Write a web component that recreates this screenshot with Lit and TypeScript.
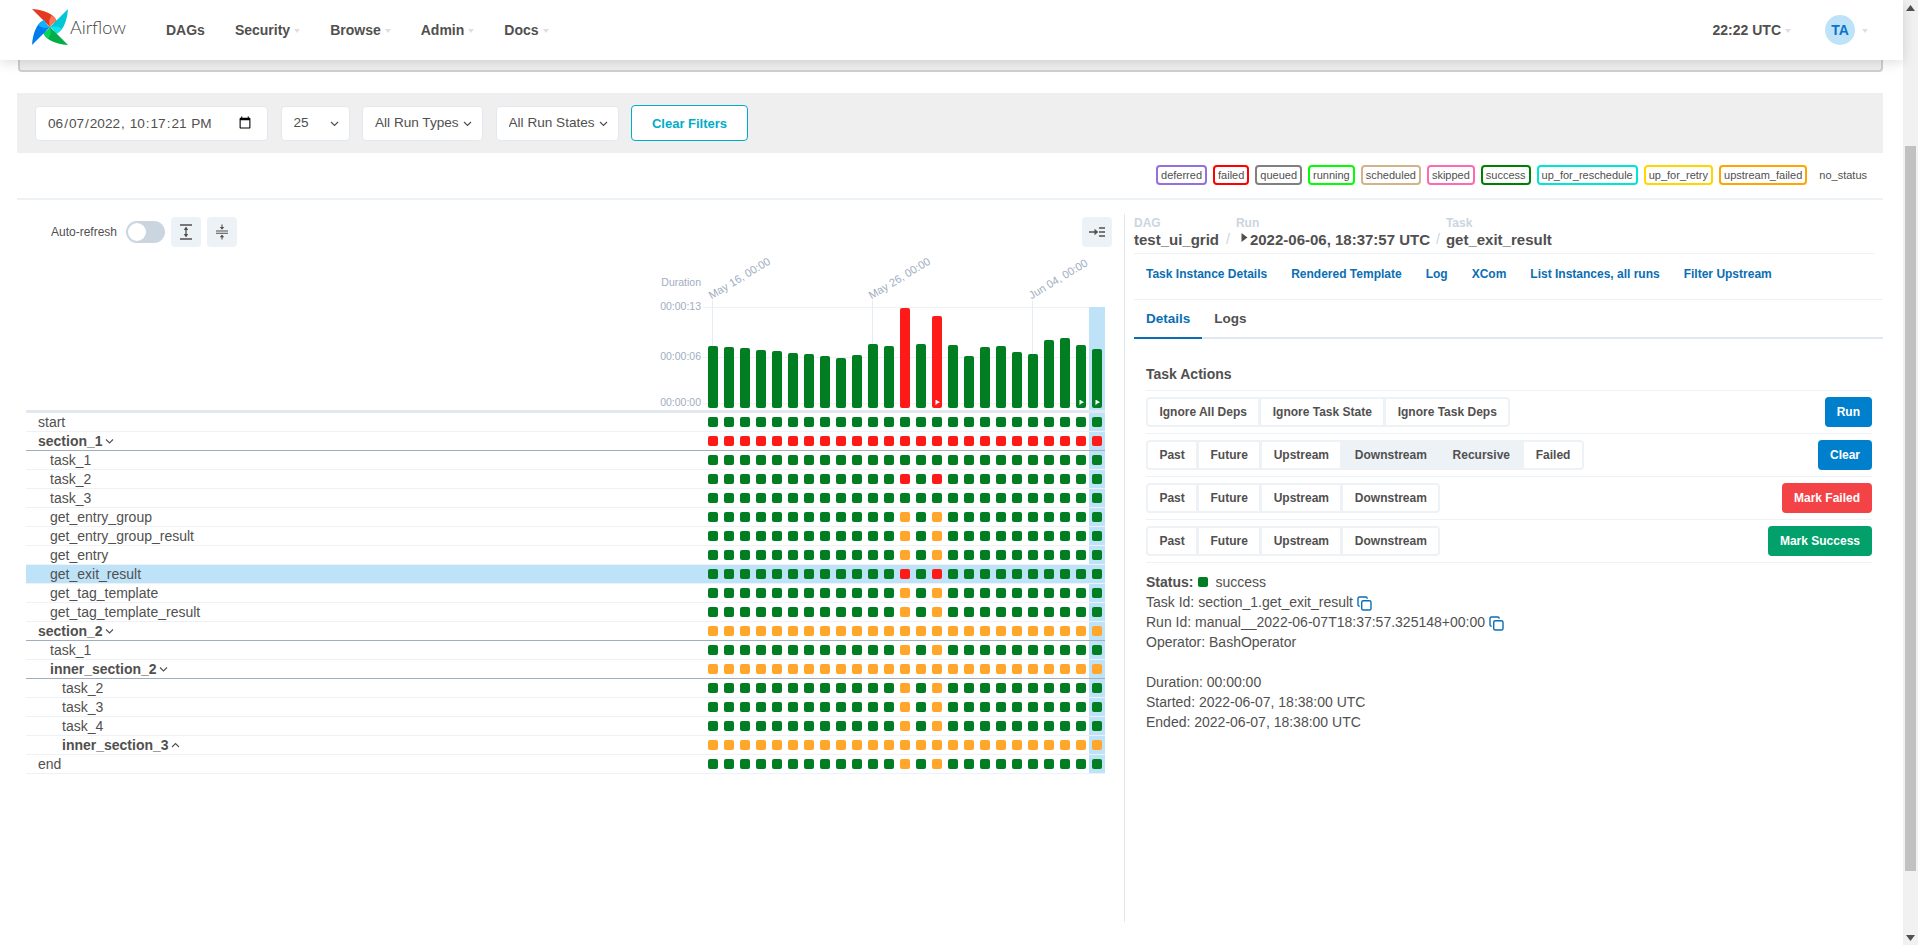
import { LitElement, html, css, svg } from "lit";
import { customElement } from "lit/decorators.js";

const HEIGHTS = [62,61,60,58,57,55,54,52,50,53,64,62,100,64,92,63,52,61,62,56,54,68,70,63,59];
const FAILED_BARS = new Set([12, 14]);
const PLAY_BARS = new Set([14, 23, 24]);
const TICKS = [
  { x: 7, label: "May 16, 00:00" },
  { x: 167, label: "May 26, 00:00" },
  { x: 327, label: "Jun 04, 00:00" },
];

type Row = { name: string; level: number; kind: "g" | "o" | "r" | "allo" | "allr" | "allg"; group?: "open" | "closed"; selected?: boolean };
const ROWS: Row[] = [
  { name: "start", level: 0, kind: "allg" },
  { name: "section_1", level: 0, kind: "allr", group: "open" },
  { name: "task_1", level: 1, kind: "allg" },
  { name: "task_2", level: 1, kind: "r" },
  { name: "task_3", level: 1, kind: "allg" },
  { name: "get_entry_group", level: 1, kind: "o" },
  { name: "get_entry_group_result", level: 1, kind: "o" },
  { name: "get_entry", level: 1, kind: "o" },
  { name: "get_exit_result", level: 1, kind: "r", selected: true },
  { name: "get_tag_template", level: 1, kind: "o" },
  { name: "get_tag_template_result", level: 1, kind: "o" },
  { name: "section_2", level: 0, kind: "allo", group: "open" },
  { name: "task_1", level: 1, kind: "o" },
  { name: "inner_section_2", level: 1, kind: "allo", group: "open" },
  { name: "task_2", level: 2, kind: "o" },
  { name: "task_3", level: 2, kind: "o" },
  { name: "task_4", level: 2, kind: "o" },
  { name: "inner_section_3", level: 2, kind: "allo", group: "closed" },
  { name: "end", level: 0, kind: "o" },
];

const LEGEND = [
  ["deferred", "#9370db"], ["failed", "#ff0000"], ["queued", "#808080"], ["running", "#00ff00"],
  ["scheduled", "#d2b48c"], ["skipped", "#ff69b4"], ["success", "#008000"], ["up_for_reschedule", "#00e5d6"],
  ["up_for_retry", "#ffd700"], ["upstream_failed", "#ffa500"],
];

const stateClass = (r: Row, i: number) => {
  const k = r.kind as string;
  if (k === "allr") return "red";
  if (k === "allo") return "orange";
  if (k === "allg") return "green";
  if (i === 12 || i === 14) return k === "r" ? "red" : "orange";
  return "green";
};

const chevDown = svg`<path d="M1 1.5 L4.5 5 L8 1.5" fill="none" stroke="currentColor" stroke-width="1.1"/>`;
const chevUp = svg`<path d="M1 5 L4.5 1.5 L8 5" fill="none" stroke="currentColor" stroke-width="1.1"/>`;

const copyIcon = html`<svg class="copy" width="15" height="15" viewBox="0 0 15 15" fill="none" stroke="#0a6eb4" stroke-width="1.4">
  <rect x="4.7" y="4.7" width="9.3" height="9.3" rx="1.6"/>
  <path d="M2.7 10.2 H2.4 A1.4 1.4 0 0 1 1 8.8 V2.4 A1.4 1.4 0 0 1 2.4 1 H8.8 A1.4 1.4 0 0 1 10.2 2.4 V2.7"/>
</svg>`;

const selectArrow = html`<svg class="sel-arrow" width="9" height="6" viewBox="0 0 9 6"><path d="M1 1 L4.5 4.5 L8 1" fill="none" stroke="#51504f" stroke-width="1.2"/></svg>`;

const logo = html`<svg class="logo" width="36" height="36" viewBox="0 0 36 36">
  ${[
    [0, "#e43921", "#ff7557"],
    [90, "#00c7d4", "#11e1ee"],
    [180, "#00ad46", "#04d659"],
    [270, "#017cee", "#0cb6ff"],
  ].map(([a, dark, light]) => svg`<g transform="rotate(${a} 18 18)">
    <path d="M0 0 L18 18 C19 15 22 13.5 25 12.5 C23 6 14 1 0 0 Z" fill="${dark}"/>
    <path d="M18 18 C19 15 22 13.5 25 12.5 C24 10 22 8 19.5 6.5 C17 10 16.5 14 18 18 Z" fill="${light}"/>
  </g>`)}
</svg>`;

@customElement("app-root")
export class AppRoot extends LitElement {
  static styles = css`
    :host { display: block; height: 100vh; overflow: hidden; font-family: "Liberation Sans", Arial, sans-serif; color: #51504f; font-size: 14px; background: #fff; }
    * { box-sizing: border-box; }
    .page { display: flex; height: 100%; }
    .content { flex: 1; min-width: 0; display: flex; flex-direction: column; }

    .scrollbar { width: 15px; background: #f1f1f1; display: flex; flex-direction: column; align-items: center; }
    .arrow-btn { height: 15px; display: flex; align-items: center; justify-content: center; flex: none; }
    .track { flex: 1; width: 100%; padding: 131px 2px 59px; }
    .thumb { height: 100%; background: #c1c1c1; }

    nav { height: 60px; flex: none; background: #fff; display: flex; align-items: center; padding: 0 34px 0 32px; box-shadow: 0 2px 12px rgba(0,0,0,.14); position: relative; z-index: 2; }
    .logo { display: block; margin-top: -6px; flex: none; }
    .brand { font-family: Lato, sans-serif; font-size: 18px; font-weight: 300; margin: -6px 0 0 2px; width: 56px; color: #444; }
    .nav-item { font-weight: 700; font-size: 14px; margin-left: 30px; display: flex; align-items: center; }
    .nav-item.first { margin-left: 40px; }
    .caret { width: 0; height: 0; border: 3.5px solid transparent; border-top: 4px solid #e6dae6; border-bottom: 0; margin-left: 4px; margin-top: 2px; }
    .spacer { flex: 1; }
    .clock { margin-right: 34px; }
    .avatar { width: 30px; height: 30px; border-radius: 50%; background: #bee3f8; color: #0a73c8; font-weight: 700; display: flex; align-items: center; justify-content: center; font-size: 14px; }
    .nav-user { display: flex; align-items: center; }
    .nav-user .caret { margin-left: 7px; margin-right: 1px; }

    .stub { height: 12px; flex: none; margin: 0 20px 0 18px; background: #efefef; border: 2px solid #cfcfcf; border-top: 0; border-radius: 0 0 4px 4px; }

    .filters { height: 60px; flex: none; margin: 21px 20px 0 17px; background: #efefef; display: flex; align-items: center; padding-left: 18px; gap: 12.5px; }
    .date { width: 233px; height: 35px; border: 1px solid #e2e8f0; border-radius: 4px; background: #fff; padding: 0 13px 0 11px; font: 13.6px "Liberation Sans", Arial, sans-serif; color: #51504f; outline: none; }
    .sel { position: relative; height: 35px; }
    .sel select { appearance: none; -webkit-appearance: none; height: 100%; width: 100%; border: 1px solid #e2e8f0; border-radius: 4px; background: #fff; font: 13.6px "Liberation Sans", Arial, sans-serif; color: #51504f; padding: 0 0 2px 12px; outline: none; }
    .sel-arrow { position: absolute; right: 11px; top: 15px; pointer-events: none; }
    .w25 { width: 69px; } .wtypes { width: 121px; } .wstates { width: 123px; }
    .clear-f { height: 36px; width: 117px; border: 1.5px solid #00acc8; border-radius: 4px; background: #fff; color: #00acc8; font: 700 13px "Liberation Sans", Arial, sans-serif; padding: 0; }

    .legend { height: 45px; flex: none; margin: 0 20px 0 17px; display: flex; justify-content: flex-end; align-items: flex-start; padding: 12px 10px 0 0; gap: 6px; font-size: 11px; }
    .legend span { height: 20px; border: 2px solid; border-radius: 4px; padding: 0 3px; line-height: 16px; white-space: nowrap; }
    .legend .none { border-color: transparent; padding: 0 4px; }
    .rule { height: 2px; flex: none; margin: 0 20px 0 17px; background: #edf2f7; }

    .main { display: flex; height: 708px; flex: none; margin: 14px 20px 0 17px; }
    .left { width: 1108px; flex: none; border-right: 1px solid #e2e8f0; padding: 3px 12px 0 9px; }
    .right { flex: 1; min-width: 0; padding-left: 9px; }

    .toolbar { display: flex; align-items: center; height: 30px; padding-left: 25px; }
    .toolbar label { font-size: 12px; margin-right: 9px; }
    .switch { width: 39px; height: 22px; border-radius: 11px; background: #cbd5e0; padding: 2px; margin-right: 6px; }
    .knob { width: 18px; height: 18px; border-radius: 50%; background: #fff; }
    .icon-btn { width: 30px; height: 30px; border-radius: 4px; background: #edf2f7; display: flex; align-items: center; justify-content: center; margin-right: 6px; border: 0; padding: 0; }
    .icon-btn.end { margin: 0 0 0 auto; }

    .table { margin-right: 7px; }
    .chart { height: 163px; display: flex; justify-content: flex-end; align-items: flex-end; border: 0; }
    .plot { position: relative; width: 400px; height: 103px; display: flex; }
    .grid-line { position: absolute; left: -2px; right: 0; height: 1px; background: #edf2f7; }
    .y-label { position: absolute; right: 404px; font-size: 10.5px; line-height: 12px; color: #a0aec0; white-space: nowrap; }
    .tick { position: absolute; top: -7px; width: 1px; height: 103px; background: #e8edf3; }
    .tick-label { position: absolute; left: 1px; top: -11px; font-size: 11px; line-height: 13px; color: #a0aec0; white-space: nowrap; transform-origin: 0 100%; transform: rotate(-31deg); }
    .col { width: 16px; position: relative; display: flex; align-items: flex-end; justify-content: center; padding-bottom: 2px; }
    .col.on { background: #bee3f8; }
    .bar { width: 10px; border-radius: 2px; position: relative; z-index: 1; }
    .bar svg { position: absolute; left: 3px; bottom: 3px; display: block; }
    .green { background: #017e21; } .red { background: #fd1a18; } .orange { background: #ffa62b; }

    .rows { border-top: 3px solid #e2e8f0; }
    .row { display: flex; height: 19px; border-bottom: 1px solid #edf2f7; }
    .row.group { border-bottom-color: #a0aec0; }
    .row.closed { border-bottom-color: #edf2f7; }
    .row.sel { background: #bee3f8; }
    .name { flex: 1; line-height: 18px; padding-left: 12px; white-space: nowrap; display: flex; align-items: center; }
    .l1 { padding-left: 24px; } .l2 { padding-left: 36px; }
    .group .name { font-weight: 700; }
    .chev { margin-left: 2px; color: #51504f; margin-top: 1px; }
    .cells { width: 400px; display: flex; }
    .cell { width: 16px; height: 18px; display: flex; align-items: center; justify-content: center; }
    .row .cell.on { background: #bee3f8; }
    .sq { width: 10px; height: 10px; border-radius: 2px; display: block; }

    .crumbs { height: 40px; border-bottom: 1px solid #edf2f7; display: flex; align-items: flex-start; margin-right: 8px; padding-top: 3px; }
    .crumb { display: flex; flex-direction: column; }
    .crumb small { font-size: 12px; line-height: 12px; color: #cbd5e0; font-weight: 700; }
    .crumb b { font-size: 15px; line-height: 17px; margin-top: 2px; white-space: nowrap; display: flex; align-items: center; }
    .sep { color: #cbd5e0; font-size: 14px; margin: 14px 6px 0 7px; line-height: 17px; }
    .sep.b { margin: 14px 6px 0 6px; }
    .play { margin: -5px 2px 0 5px; }
    .links { height: 46px; border-bottom: 1px solid #edf2f7; display: flex; gap: 24px; padding: 13px 0 0 12px; font-size: 12px; font-weight: 700; color: #0a6eb4; }
    .tabs { height: 39px; display: flex; border-bottom: 2px solid #e2e8f0; }
    .tab { padding: 0 12px; height: 39px; line-height: 38px; font-weight: 700; font-size: 13.5px; }
    .tab.active { color: #0a6eb4; border-bottom: 2px solid #0a6eb4; }
    .panel { padding: 0 11px 0 12px; }
    .panel h4 { margin: 0; height: 52px; padding-top: 27px; line-height: 16px; font-size: 14px; font-weight: 700; border-bottom: 1px solid #edf2f7; }
    .act { display: flex; justify-content: space-between; align-items: center; padding: 6px 0; height: 43px; border-bottom: 1px solid #edf2f7; }
    .bgroup { display: flex; }
    .bgroup span { height: 30px; line-height: 26px; padding: 0 11.4px; font-size: 12px; font-weight: 700; border: 2px solid #edf2f7; margin-left: -1px; white-space: nowrap; }
    .bgroup span:first-child { margin-left: 0; border-radius: 4px 0 0 4px; }
    .bgroup span:last-child { border-radius: 0 4px 4px 0; }
    .bgroup span.on { background: #edf2f7; }
    .go { height: 30px; line-height: 30px; padding: 0 12px; border-radius: 4px; color: #fff; font-size: 12px; font-weight: 700; white-space: nowrap; }
    .blue { background: #0080cc; } .fail { background: #f44346; } .succ { background: #02a06b; }
    .info { margin-top: 9px; line-height: 20px; }
    .info div { display: flex; align-items: center; height: 20px; white-space: pre; }
    .status-sq { width: 10px; height: 10px; border-radius: 2px; background: #017e21; margin: 0 7px 0 5px; }
    .copy { margin-left: 4px; margin-top: 2px; }
  `;

  render() {
    const cols = Array.from({ length: 25 }, (_, i) => i);
    return html`<div class="page">
      <div class="content">
        <nav>
          ${logo}<span class="brand">Airflow</span>
          <span class="nav-item first">DAGs</span>
          ${["Security", "Browse", "Admin", "Docs"].map((n) => html`<span class="nav-item">${n}<i class="caret"></i></span>`)}
          <span class="spacer"></span>
          <span class="nav-item clock">22:22 UTC<i class="caret"></i></span>
          <span class="nav-user"><span class="avatar">TA</span><i class="caret"></i></span>
        </nav>
        <div class="stub"></div>
        <div class="filters">
          <input class="date" type="datetime-local" step="1" value="2022-06-07T22:17:21" />
          <div class="sel w25"><select><option>25</option></select>${selectArrow}</div>
          <div class="sel wtypes"><select><option>All Run Types</option></select>${selectArrow}</div>
          <div class="sel wstates"><select><option>All Run States</option></select>${selectArrow}</div>
          <button class="clear-f">Clear Filters</button>
        </div>
        <div class="legend">
          ${LEGEND.map(([n, c]) => html`<span style="border-color:${c}">${n}</span>`)}
          <span class="none">no_status</span>
        </div>
        <div class="rule"></div>
        <div class="main">
          <div class="left">
            <div class="toolbar">
              <label>Auto-refresh</label>
              <div class="switch"><div class="knob"></div></div>
              <button class="icon-btn"><svg width="14" height="16" viewBox="0 0 14 16" stroke="#51504f" fill="#51504f" stroke-width="1.3">
                <path d="M1 1 H13 M1 15 H13 M7 3.5 V12.5" fill="none"/><path d="M7 2.8 L9.3 6 H4.7 Z M7 13.2 L9.3 10 H4.7 Z" stroke="none"/></svg></button>
              <button class="icon-btn"><svg width="14" height="16" viewBox="0 0 14 16" stroke="#51504f" fill="#51504f" stroke-width="1.1">
                <path d="M1 7 H13 M1 9.3 H13 M7 0.5 V4 M7 12 V15.5" fill="none"/><path d="M7 5.8 L9.2 3 H4.8 Z M7 10.5 L9.2 13.3 H4.8 Z" stroke="none"/></svg></button>
              <button class="icon-btn end"><svg width="16" height="10" viewBox="0 0 16 10" stroke="#51504f" fill="#51504f" stroke-width="1.3">
                <path d="M0 5 H7 M10 1 H16 M10 5 H16 M10 9 H16" fill="none"/><path d="M9.3 5 L5.5 1.8 V8.2 Z" stroke="none"/></svg></button>
            </div>
            <div class="table">
              <div class="chart">
                <div class="plot">
                  <div class="grid-line" style="top:0"></div>
                  <div class="grid-line" style="top:50px"></div>
                  <div class="grid-line" style="top:96px"></div>
                  <span class="y-label" style="top:-31px">Duration</span>
                  <span class="y-label" style="top:-7px">00:00:13</span>
                  <span class="y-label" style="top:43px">00:00:06</span>
                  <span class="y-label" style="top:89px">00:00:00</span>
                  ${TICKS.map((t) => html`<div class="tick" style="left:${t.x}px"><span class="tick-label">${t.label}</span></div>`)}
                  ${cols.map((i) => html`<div class="col ${i === 24 ? "on" : ""}">
                    <div class="bar ${FAILED_BARS.has(i) ? "red" : "green"}" style="height:${HEIGHTS[i]}px">
                      ${PLAY_BARS.has(i) ? html`<svg width="5" height="5" viewBox="0 0 5 5"><path d="M0.5 0 H1.3 L5 2.3 L1.3 4 V5 H0.5 Z" fill="#fff"/></svg>` : ""}
                    </div>
                  </div>`)}
                </div>
              </div>
              <div class="rows">
                ${ROWS.map((r) => html`<div class="row ${r.group ? "group" : ""} ${r.group === "closed" ? "closed" : ""} ${r.selected ? "sel" : ""}">
                  <div class="name ${r.level === 1 ? "l1" : r.level === 2 ? "l2" : ""}">${r.name}${r.group
                    ? html`<svg class="chev" width="9" height="7" viewBox="0 0 9 7">${r.group === "open" ? chevDown : chevUp}</svg>`
                    : ""}</div>
                  <div class="cells">${cols.map((i) => html`<div class="cell ${i === 24 ? "on" : ""}"><i class="sq ${stateClass(r, i)}"></i></div>`)}</div>
                </div>`)}
              </div>
            </div>
          </div>
          <div class="right">
            <div class="crumbs">
              <div class="crumb"><small>DAG</small><b>test_ui_grid</b></div>
              <span class="sep">/</span>
              <div class="crumb"><small>Run</small><b><svg class="play" width="7" height="9" viewBox="0 0 7 9"><path d="M0.5 0 L6.5 4.5 L0.5 9 Z" fill="#51504f"/></svg>2022-06-06, 18:37:57 UTC</b></div>
              <span class="sep b">/</span>
              <div class="crumb"><small>Task</small><b>get_exit_result</b></div>
            </div>
            <div class="links">
              <span>Task Instance Details</span><span>Rendered Template</span><span>Log</span><span>XCom</span><span>List Instances, all runs</span><span>Filter Upstream</span>
            </div>
            <div class="tabs"><span class="tab active">Details</span><span class="tab">Logs</span></div>
            <div class="panel">
              <h4>Task Actions</h4>
              <div class="act"><div class="bgroup"><span>Ignore All Deps</span><span>Ignore Task State</span><span>Ignore Task Deps</span></div><span class="go blue">Run</span></div>
              <div class="act"><div class="bgroup"><span>Past</span><span>Future</span><span>Upstream</span><span class="on">Downstream</span><span class="on">Recursive</span><span>Failed</span></div><span class="go blue">Clear</span></div>
              <div class="act"><div class="bgroup"><span>Past</span><span>Future</span><span>Upstream</span><span>Downstream</span></div><span class="go fail">Mark Failed</span></div>
              <div class="act"><div class="bgroup"><span>Past</span><span>Future</span><span>Upstream</span><span>Downstream</span></div><span class="go succ">Mark Success</span></div>
              <div class="info">
                <div><b>Status:</b><i class="status-sq"></i>success</div>
                <div>Task Id: section_1.get_exit_result${copyIcon}</div>
                <div>Run Id: manual__2022-06-07T18:37:57.325148+00:00${copyIcon}</div>
                <div>Operator: BashOperator</div>
                <div> </div>
                <div>Duration: 00:00:00</div>
                <div>Started: 2022-06-07, 18:38:00 UTC</div>
                <div>Ended: 2022-06-07, 18:38:00 UTC</div>
              </div>
            </div>
          </div>
        </div>
      </div>
      <div class="scrollbar">
        <div class="arrow-btn"><svg width="9" height="6" viewBox="0 0 9 6"><path d="M4.5 0 L9 6 H0 Z" fill="#505050"/></svg></div>
        <div class="track"><div class="thumb"></div></div>
        <div class="arrow-btn"><svg width="9" height="6" viewBox="0 0 9 6"><path d="M4.5 6 L9 0 H0 Z" fill="#505050"/></svg></div>
      </div>
    </div>`;
  }
}
